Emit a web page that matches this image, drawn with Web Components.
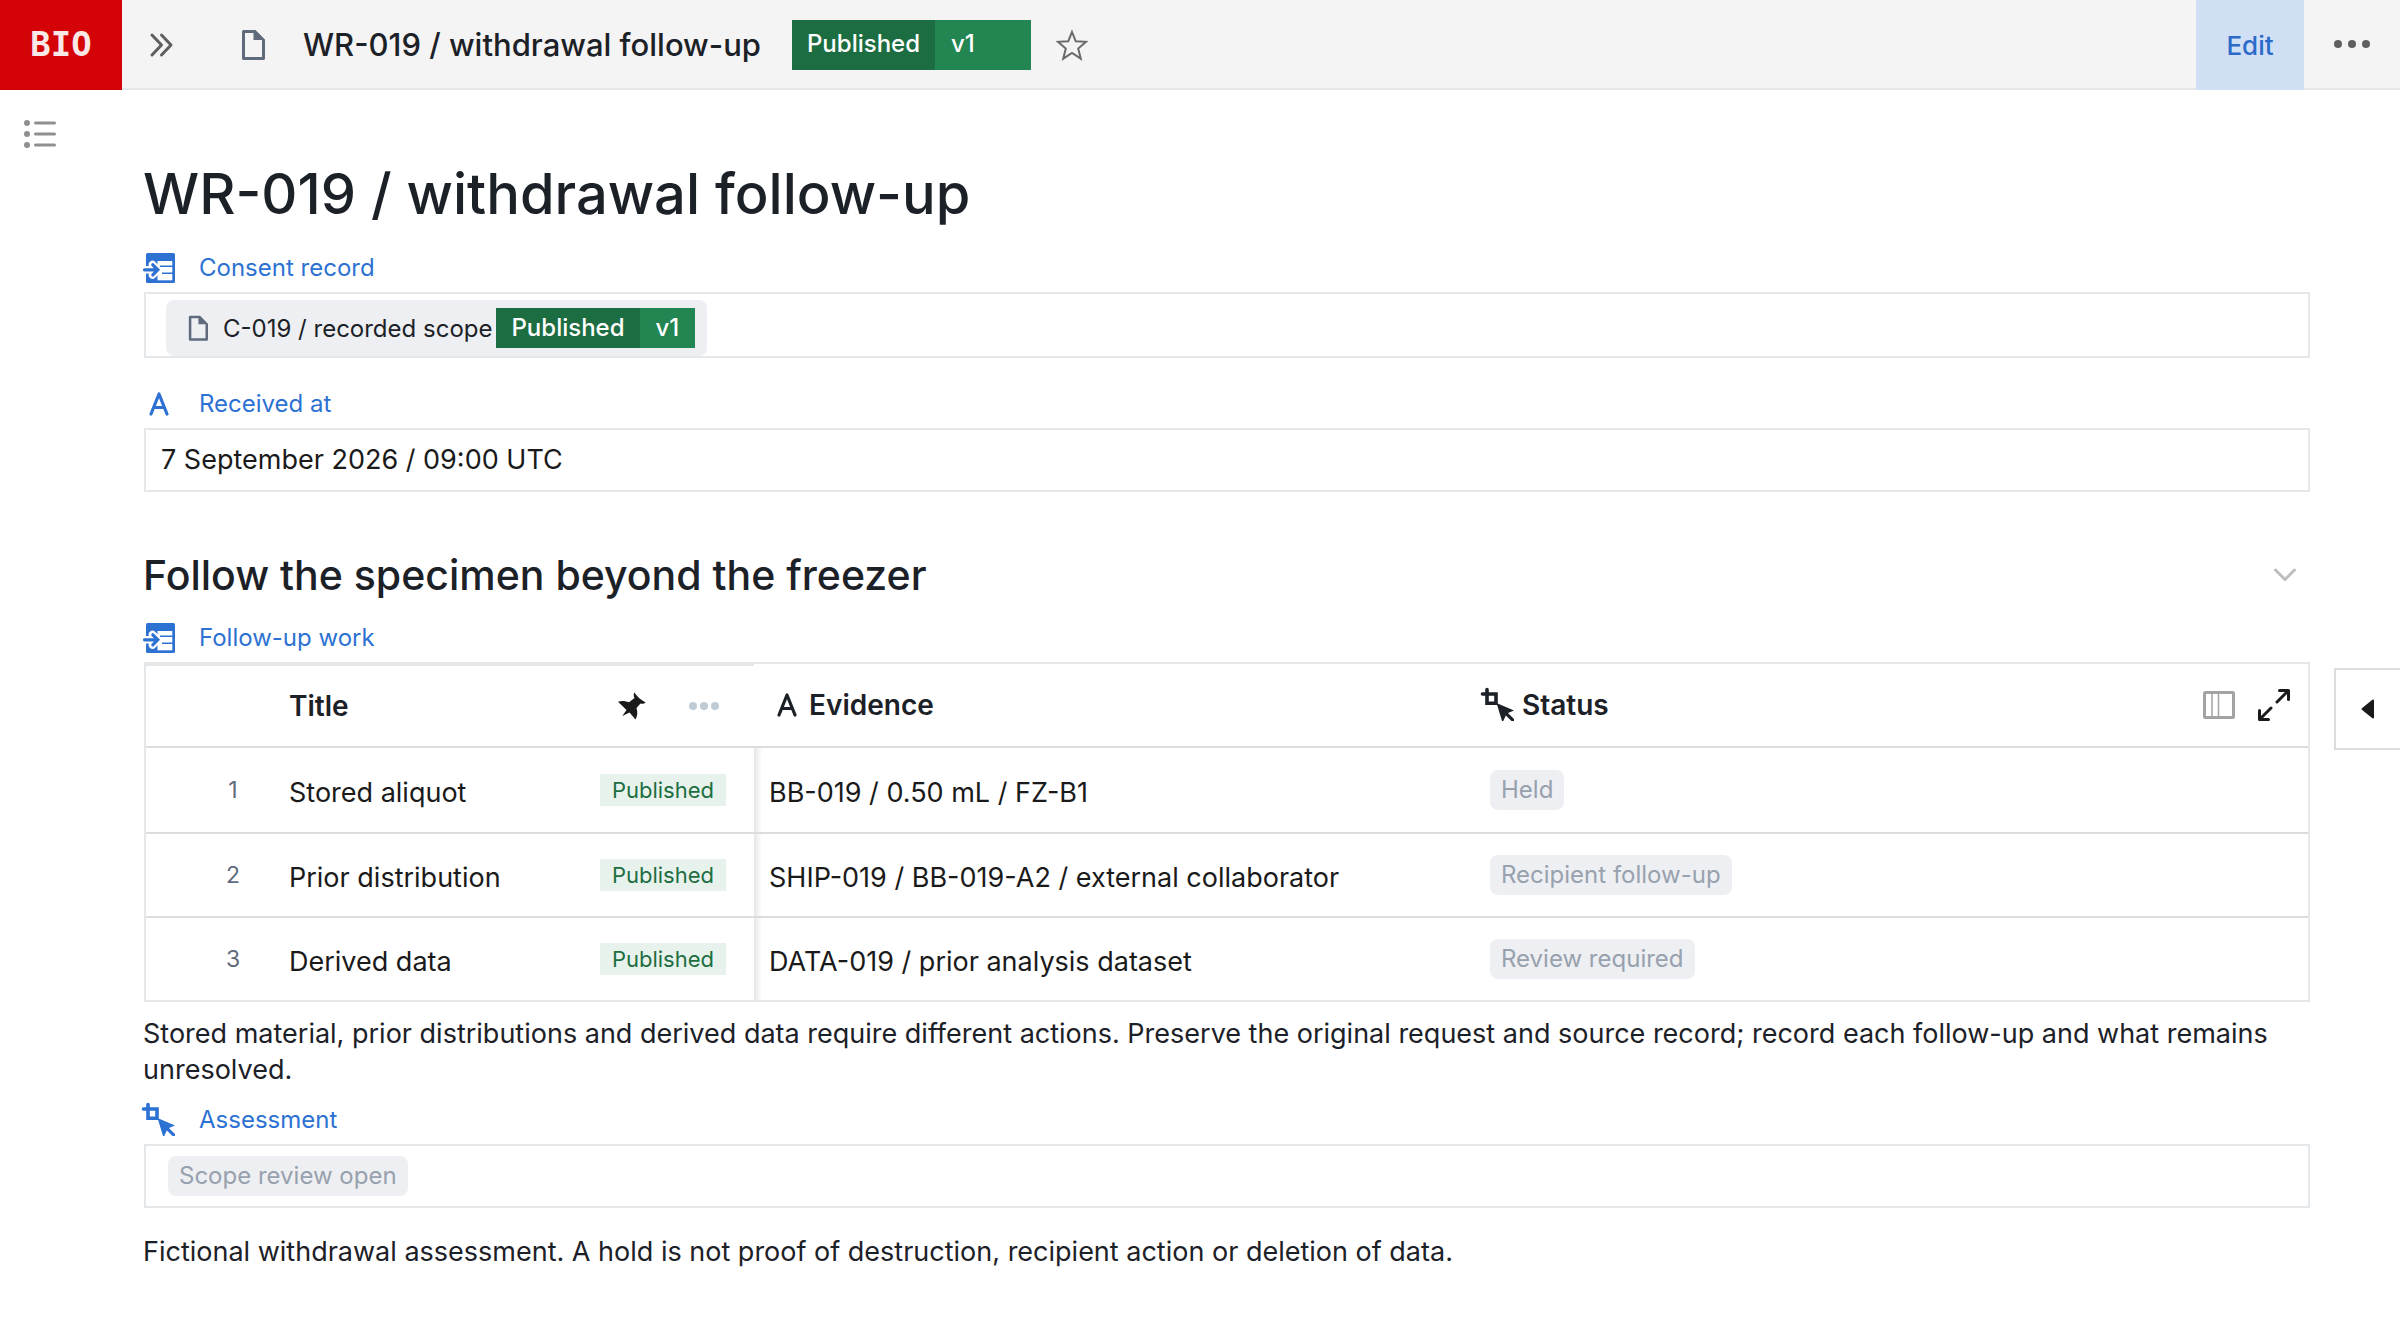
<!DOCTYPE html>
<html lang="en">
<head>
<meta charset="utf-8">
<title>WR-019 / withdrawal follow-up</title>
<style>
  html, body { margin: 0; }
  body {
    --ink: #1c2127; --black: #1a1a1a; --blue: #2d72d2; --line: #e5e8eb; --rule: #dcdcdd;
    --green: #1c6e42; --green-2: #238551; --chip: #edeff2;
    font-family: Inter, "Liberation Sans", sans-serif; color: var(--ink); background: #fff;
  }
</style>
</head>
<body>
<record-page></record-page>
<script>
const ICONS = {
  chevrons: ['0 0 24 24', '<path d="M2 2l9.500 10L2 22M11.500 2L21 12l-9.500 10" fill="none" stroke="currentColor" stroke-width="3" stroke-linecap="round" stroke-linejoin="round"/>'],
  file: ['0 0 24 32', '<path fill-rule="evenodd" d="M2.500 1H14.500L24 10.500V29.500Q24 31 22.500 31H2.500Q1 31 1 29.500V2.500Q1 1 2.500 1ZM4 4V28H21V11H12.500V4Z" fill="currentColor"/>'],
  star: ['0 0 32 32', '<path d="M16 3l3.700 9.200 10.300.6-7.800 6.700 2.600 10.200L16 24l-8.800 5.700 2.600-10.200L2 12.800l10.300-.6z" fill="none" stroke="currentColor" stroke-width="2"/>'],
  more: ['0 0 36 8', '<g fill="currentColor"><circle cx="4" cy="4" r="4"/><circle cx="18" cy="4" r="4"/><circle cx="32" cy="4" r="4"/></g>'],
  moreSmall: ['0 0 30 8', '<g fill="currentColor"><circle cx="4" cy="4" r="4"/><circle cx="15" cy="4" r="4"/><circle cx="26" cy="4" r="4"/></g>'],
  list: ['0 0 32 30', '<g fill="currentColor"><circle cx="3" cy="4" r="3"/><circle cx="3" cy="15" r="3"/><circle cx="3" cy="26" r="3"/><rect x="10" y="2.500" width="22" height="3" rx="1.500"/><rect x="10" y="13.500" width="22" height="3" rx="1.500"/><rect x="10" y="24.500" width="22" height="3" rx="1.500"/></g>'],
  linked: ['0 0 32 32', '<rect x="3" y="1" width="29" height="30" rx="1.500" fill="currentColor"/><path d="M14.500 9H29.300V28.300H14.500Z" fill="#fff"/><path d="M17 14.200H30M19 21.200H30" stroke="currentColor" stroke-width="1.400"/><path d="M0 17.800H14M9.500 12.500L14.800 17.800L9.500 23.100" fill="none" stroke="#fff" stroke-width="7.500" stroke-linecap="round" stroke-linejoin="round"/><path d="M1.500 17.800H14M9.800 12.800L14.800 17.800L9.800 22.800" fill="none" stroke="currentColor" stroke-width="3.200" stroke-linecap="round"/>'],
  letter: ['0 0 20 24', '<path d="M2 22L10 2L18 22M5 15.500H15" fill="none" stroke="currentColor" stroke-width="3.200" stroke-linecap="round" stroke-linejoin="round"/>'],
  select: ['0 0 32 32', '<path d="M5 .5V14.200H14V5H.5" fill="none" stroke="currentColor" stroke-width="3.600" stroke-linecap="round"/><path d="M14.500 14L32 21.500L26 24L32 30V32H29.500L23.800 26.500L21.300 32H20Z" fill="currentColor"/>'],
  pin: ['0 0 28 28', '<path d="M16.500 .3C18 3.500 22 7.500 27.700 10.500C26 12 24 12 22.500 11.500L18.500 16C19.800 20 19.500 24 17.500 27.500L11.500 20.500L4.300 24L8.500 18L0 9.800C4 8.200 8 9.300 11 10.200L16.500 6C15.500 4 15.500 2 16.500 .3Z" fill="currentColor"/>'],
  columns: ['0 0 32 28', '<rect x="1.500" y="1.500" width="29" height="25" rx="1" fill="none" stroke="currentColor" stroke-width="3"/><path d="M9 2V26M15.500 2V26" stroke="currentColor" stroke-width="1.500"/>'],
  expand: ['0 0 32 32', '<path d="M19 13L29 3M21.500 1.500H30.500V10.500M13 19L3 29M10.500 30.500H1.500V21.500" fill="none" stroke="currentColor" stroke-width="3" stroke-linecap="round" stroke-linejoin="round"/>'],
  down: ['0 0 24 14', '<path d="M2.500 2L12 11.500L21.500 2" fill="none" stroke="currentColor" stroke-width="3" stroke-linecap="round" stroke-linejoin="round"/>'],
  left: ['0 0 14 20', '<path d="M1.500 10L12 1.500V18.500Z" fill="currentColor" stroke="currentColor" stroke-width="2" stroke-linejoin="round"/>']
};

const RESET = `
  *, *::before { box-sizing: border-box; }
  button { border: 0; background: none; padding: 0; margin: 0; font: inherit; color: inherit; display: flex; align-items: center; justify-content: center; cursor: pointer; }
  h1, h2, p { margin: 0; }
`;

function define(name, render) {
  customElements.define(name, class extends HTMLElement {
    constructor() { super(); this.attachShadow({ mode: 'open' }); }
    connectedCallback() {
      const t = document.createElement('template');
      t.innerHTML = render(this);
      this.shadowRoot.replaceChildren(t.content.cloneNode(true));
    }
  });
}

define('ui-icon', el => {
  const [box, art] = ICONS[el.getAttribute('name')];
  const [, , w, h] = box.split(' ');
  const width = el.getAttribute('width') || w;
  return `<style>:host{display:block;flex:none}svg{display:block;overflow:visible}</style>
    <svg width="${width}" height="${width * h / w}" viewBox="${box}" aria-hidden="true">${art}</svg>`;
});

define('version-tag', () => `<style>${RESET}
  :host { display: inline-flex; height: 40px; font-size: 24px; line-height: 40px; font-weight: 500; color: #fff; }
  :host([large]) { height: 50px; line-height: 48px; }
  .state { background: var(--green); padding: 0 15px; }
  .version { background: var(--green-2); padding: 0 16px; }
  :host([large]) .version { padding-right: 56px; }
  </style><span class="state"><slot></slot></span><span class="version"><slot name="version"></slot></span>`);

define('soft-tag', () => `<style>${RESET}
  :host { display: inline-block; height: 40px; line-height: 40px; padding: 0 11px; border-radius: 8px; background: var(--chip); color: #98a1ae; font-size: 24px; }
  </style><slot></slot>`);

define('state-badge', () => `<style>${RESET}
  :host { display: inline-block; height: 32px; line-height: 32px; padding: 0 12px; background: #e8f2ec; color: var(--green); font-size: 22px; }
  </style><slot></slot>`);

define('top-bar', () => `<style>${RESET}
  :host { display: block; }
  header { display: flex; align-items: stretch; height: 90px; background: #f4f4f4; box-shadow: inset 0 -2px var(--line); }
  .logo { width: 122px; background: #d40308; color: rgba(255,255,255,.92); font: 700 34px/88px "DejaVu Sans Mono", "Liberation Mono", monospace; text-align: center; text-decoration: none; }
  nav { display: flex; align-items: center; flex: 1; }
  .toggle { width: 80px; height: 90px; color: #5f5f5f; }
  .file { color: #5f6b7c; margin: 0 38px 0 39px; }
  .name { font-size: 31px; font-weight: 500; line-height: 40px; margin-right: 31px; white-space: nowrap; }
  .star { color: #6b6b6b; margin-left: 25px; }
  .edit { width: 108px; background: #d1dff5; color: #2a6bc8; font-size: 26px; font-weight: 500; }
  .more { width: 96px; height: 88px; color: #5f5f5f; }
  </style>
  <header>
    <a class="logo" href="#">BIO</a>
    <nav>
      <button class="toggle" aria-label="Expand sidebar"><ui-icon name="chevrons"></ui-icon></button>
      <ui-icon class="file" name="file"></ui-icon>
      <span class="name"><slot></slot></span>
      <version-tag large>Published<span slot="version">v1</span></version-tag>
      <button class="star" aria-label="Add to favourites"><ui-icon name="star"></ui-icon></button>
    </nav>
    <button class="edit">Edit</button>
    <button class="more" aria-label="More actions"><ui-icon name="more"></ui-icon></button>
  </header>`);

define('field-label', el => `<style>${RESET}
  :host { display: block; color: var(--blue); font-size: 24px; line-height: 32px; }
  .row { display: flex; align-items: center; height: 32px; }
  .glyph { width: 32px; margin-right: 24px; display: flex; justify-content: center; }
  </style><div class="row"><span class="glyph"><ui-icon name="${el.getAttribute('icon')}"></ui-icon></span><slot></slot></div>`);

define('field-box', () => `<style>${RESET}
  :host { display: flex; align-items: center; margin-left: 1px; height: 64px; box-sizing: border-box; border: 2px solid var(--line); }
  :host([tall]) { height: 66px; }
  </style><slot></slot>`);

define('record-chip', () => `<style>${RESET}
  :host { display: block; align-self: flex-end; margin-left: 20px; }
  a { display: flex; align-items: center; height: 56px; padding: 0 12px 0 22px; border-radius: 8px; background: var(--chip); color: var(--ink); font-size: 24px; text-decoration: none; }
  ui-icon { color: #5f6b7c; margin-right: 15px; }
  version-tag { margin-left: 4px; }
  </style><a href="#"><ui-icon name="file" width="20"></ui-icon><slot></slot><version-tag>Published<span slot="version">v1</span></version-tag></a>`);

const ROWS = [
  ['Stored aliquot', 'BB-019 / 0.50 mL / FZ-B1', 'Held'],
  ['Prior distribution', 'SHIP-019 / BB-019-A2 / external collaborator', 'Recipient follow-up'],
  ['Derived data', 'DATA-019 / prior analysis dataset', 'Review required']
];

define('work-table', () => `<style>${RESET}
  :host { display: block; margin-left: 1px; border: 2px solid var(--line); border-bottom: 0; }
  table { width: 100%; border-collapse: separate; border-spacing: 0; table-layout: fixed; font-size: 27px; color: var(--black); }
  th, td { padding: 0; height: 84px; border-bottom: 2px solid var(--rule); text-align: left; font-weight: 400; vertical-align: middle; white-space: nowrap; }
  tbody tr:first-child td { height: 86px; }
  tbody tr:last-child td { border-bottom-color: var(--line); }
  th { color: var(--ink); font-weight: 600; font-size: 28px; }
  .pinned { border-top: 2px solid var(--line); }
  .num { width: 143px; }
  .title { width: 465px; }
  .evidence { width: 714px; }
  .cell { display: flex; align-items: center; }
  .text { padding-top: 4px; }
  th .cell { gap: 12px; }
  .num .cell { color: #5f6b7c; font-size: 23px; justify-content: center; padding-left: 31px; }
  .title .cell { justify-content: space-between; padding-right: 28px; }
  th.title .cell { padding-right: 35px; }
  .tools { display: flex; align-items: center; gap: 43px; color: var(--black); }
  .dim { color: #bfccd6; }
  td.evidence .cell { padding-left: 15px; background: linear-gradient(to right, #e6e6e7, #fff) 0 0 / 8px 100% no-repeat; height: 84px; }
  tbody tr:not(:first-child) td.evidence .cell { height: 82px; }
  th.evidence .cell { padding-left: 23px; }
  th.status .cell { gap: 8px; padding-left: 14px; padding-right: 18px; }
  td.status .cell { padding-left: 22px; }
  .end { display: flex; gap: 23px; margin-left: auto; align-items: center; color: var(--black); }
  .end .grey { color: #a3a3a3; }
  </style>
  <table>
    <thead><tr>
      <th class="num pinned"></th>
      <th class="title pinned"><div class="cell">Title<span class="tools"><button aria-label="Unpin column"><ui-icon name="pin"></ui-icon></button><button class="dim" aria-label="Column menu"><ui-icon name="moreSmall"></ui-icon></button></span></div></th>
      <th class="evidence"><div class="cell"><ui-icon name="letter"></ui-icon>Evidence</div></th>
      <th class="status"><div class="cell"><ui-icon name="select"></ui-icon>Status<span class="end"><button class="grey" aria-label="Columns"><ui-icon name="columns"></ui-icon></button><button aria-label="Full screen"><ui-icon name="expand"></ui-icon></button></span></div></th>
    </tr></thead>
    <tbody>${ROWS.map((r, i) => `<tr>
      <td class="num"><div class="cell">${i + 1}</div></td>
      <td class="title"><div class="cell"><span class="text">${r[0]}</span><state-badge>Published</state-badge></div></td>
      <td class="evidence"><div class="cell"><span class="text">${r[1]}</span></div></td>
      <td class="status"><div class="cell"><soft-tag>${r[2]}</soft-tag></div></td>
    </tr>`).join('')}</tbody>
  </table>`);

define('record-page', () => `<style>${RESET}
  :host { display: block; }
  .body { display: flex; min-height: calc(100vh - 90px); }
  aside { flex: none; width: 143px; padding: 29px 24px; }
  .outline { color: #8f8f8f; }
  main { flex: 1; min-width: 0; }
  h1 { font-size: 56px; line-height: 72px; font-weight: 500; margin-top: 68px; }
  h2 { font-size: 41px; line-height: 56px; font-weight: 500; }
  p { font-size: 27px; line-height: 36px; }
  .first { margin-top: 22px; }
  .gap-s { margin-top: 8px; }
  .gap-m { margin-top: 30px; }
  input { flex: 1; min-width: 0; border: 0; outline: 0; background: none; padding: 0 15px; font: 400 27px/36px Inter, "Liberation Sans", sans-serif; color: var(--black); }
  .section { display: flex; align-items: center; justify-content: space-between; padding-right: 13px; margin-top: 55px; }
  .section button { color: #bdbdbd; }
  .table-label { margin-top: 19px; }
  .note { margin-top: 14px; }
  .assess { margin-top: 16px; }
  .last { margin-top: 26px; padding-bottom: 56px; }
  soft-tag.value { margin-left: 22px; }
  .panel { flex: none; align-self: center; margin-left: 24px; width: 66px; height: 82px; border: 2px solid var(--rule); border-right: 0; color: var(--black); }
  </style>
  <top-bar>WR-019 / withdrawal follow-up</top-bar>
  <div class="body">
    <aside><button class="outline" aria-label="Outline"><ui-icon name="list"></ui-icon></button></aside>
    <main>
      <h1>WR-019 / withdrawal follow-up</h1>
      <field-label class="first" icon="linked">Consent record</field-label>
      <field-box class="gap-s" tall><record-chip>C-019 / recorded scope</record-chip></field-box>
      <label for="received"><field-label class="gap-m" icon="letter">Received at</field-label></label>
      <field-box class="gap-s"><input id="received" readonly value="7 September 2026 / 09:00 UTC"></field-box>
      <div class="section"><h2>Follow the specimen beyond the freezer</h2><button aria-label="Collapse section"><ui-icon name="down"></ui-icon></button></div>
      <field-label class="table-label" icon="linked">Follow-up work</field-label>
      <work-table class="gap-s"></work-table>
      <p class="note">Stored material, prior distributions and derived data require different actions. Preserve the original request and source record; record each follow-up and what remains unresolved.</p>
      <field-label class="assess" icon="select">Assessment</field-label>
      <field-box class="gap-s"><soft-tag class="value">Scope review open</soft-tag></field-box>
      <p class="last">Fictional withdrawal assessment. A hold is not proof of destruction, recipient action or deletion of data.</p>
    </main>
    <button class="panel" aria-label="Open side panel"><ui-icon name="left"></ui-icon></button>
  </div>`);
</script>
</body>
</html>
